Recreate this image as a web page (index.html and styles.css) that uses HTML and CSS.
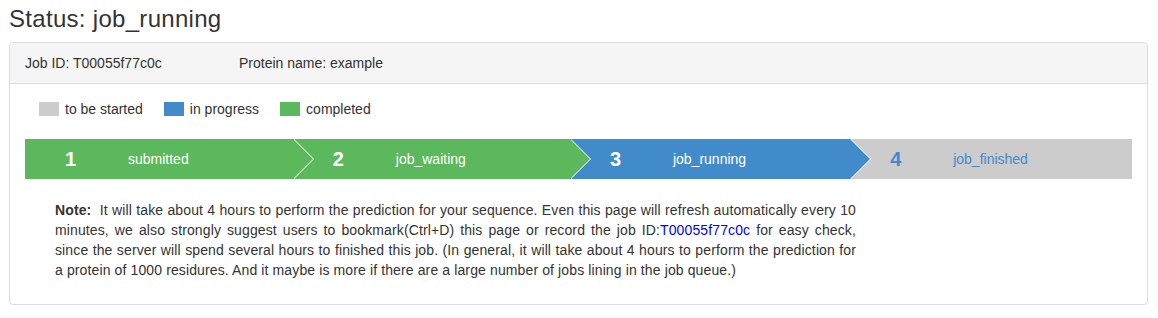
FILE: index.html
```html
<!DOCTYPE html>
<html lang="en">
<head>
    <meta charset="UTF-8">
    <title>Status: job_running</title>
    <link rel="stylesheet" href="styles.css">
</head>
<body>
    <div class="container">
        <h3 class="page-title">Status: job_running</h3>

        <div class="panel">
            <div class="panel-heading">
                <span class="info">Job ID: T00055f77c0c</span>
                <span class="info">Protein name: example</span>
            </div>
            <div class="panel-body">
                <div class="legend">
                    <div class="legend-item"><span class="swatch todo"></span>to be started</div>
                    <div class="legend-item"><span class="swatch doing"></span>in progress</div>
                    <div class="legend-item"><span class="swatch done"></span>completed</div>
                </div>

                <div class="steps">
                    <div class="step done">
                        <span class="step-num">1</span>
                        <span class="step-label">submitted</span>
                    </div>
                    <div class="step done">
                        <span class="step-num">2</span>
                        <span class="step-label">job_waiting</span>
                    </div>
                    <div class="step doing">
                        <span class="step-num">3</span>
                        <span class="step-label">job_running</span>
                    </div>
                    <div class="step todo">
                        <span class="step-num">4</span>
                        <span class="step-label">job_finished</span>
                    </div>
                </div>

                <p class="note"><b>Note:</b>&nbsp; It will take about 4 hours to perform the prediction for your sequence. Even this page will refresh automatically every 10 minutes, we also strongly suggest users to bookmark(Ctrl+D) this page or record the job ID:<a href="#">T00055f77c0c</a> for easy check, since the server will spend several hours to finished this job. (In general, it will take about 4 hours to perform the prediction for a protein of 1000 residures. And it maybe is more if there are a large number of jobs lining in the job queue.)</p>
            </div>
        </div>
    </div>
</body>
</html>
```

FILE: styles.css
```css
* {
    box-sizing: border-box;
}

body {
    margin: 0;
    font-family: 'Liberation Sans', Arial, Helvetica, sans-serif;
    font-size: 14px;
    line-height: 20px;
    color: #333;
    background: #fff;
}

.container {
    padding: 0 10px 0 9px;
}

.page-title {
    font-size: 24px;
    font-weight: normal;
    line-height: 26px;
    letter-spacing: 0.3px;
    margin: 6px 0 10px 0;
}

.panel {
    border: 1px solid #ddd;
    border-radius: 4px;
    box-shadow: 0 1px 1px rgba(0, 0, 0, 0.05);
}

.panel-heading {
    display: flex;
    background: #f5f5f5;
    border-bottom: 1px solid #ddd;
    border-radius: 3px 3px 0 0;
    padding: 10px 15px;
}

.info {
    width: 214px;
}

.panel-body {
    padding: 15px 15px 14px;
}

.legend {
    display: flex;
    padding-left: 14px;
}

.legend-item {
    display: flex;
    align-items: center;
    margin-right: 21px;
}

.swatch {
    width: 20px;
    height: 14px;
    margin-right: 6px;
}

.swatch.todo { background: #ccc; }
.swatch.doing { background: #428bca; }
.swatch.done { background: #5cb85c; }

.steps {
    display: flex;
    margin-top: 20px;
    height: 40px;
}

.step {
    flex: 1 1 auto;
    display: flex;
    align-items: center;
    padding-left: 40px;
    position: relative;
    color: #fff;
    white-space: nowrap;
}

.step.done { background: #5cb85c; }
.step.doing { background: #428bca; }
.step.todo { background: #ccc; color: #428bca; }

.step:not(:last-child)::before,
.step:not(:last-child)::after {
    content: '';
    position: absolute;
    top: 0;
    border-style: solid;
    border-width: 20px 0 20px 20px;
    border-color: transparent;
}

.step:not(:last-child)::before {
    right: -21px;
    border-left-color: #fff;
    z-index: 1;
}

.step:not(:last-child)::after {
    right: -20px;
    z-index: 2;
}

.step.done::after { border-left-color: #5cb85c; }
.step.doing::after { border-left-color: #428bca; }

.step-num {
    width: 63px;
    font-size: 20px;
    font-weight: bold;
}

.step-label {
    font-size: 14px;
}

.note {
    width: 801px;
    margin: 21px 0 10px 30px;
    text-align: justify;
    letter-spacing: 0.12px;
}

.note a {
    color: #0000ff;
    text-decoration: none;
}
```
